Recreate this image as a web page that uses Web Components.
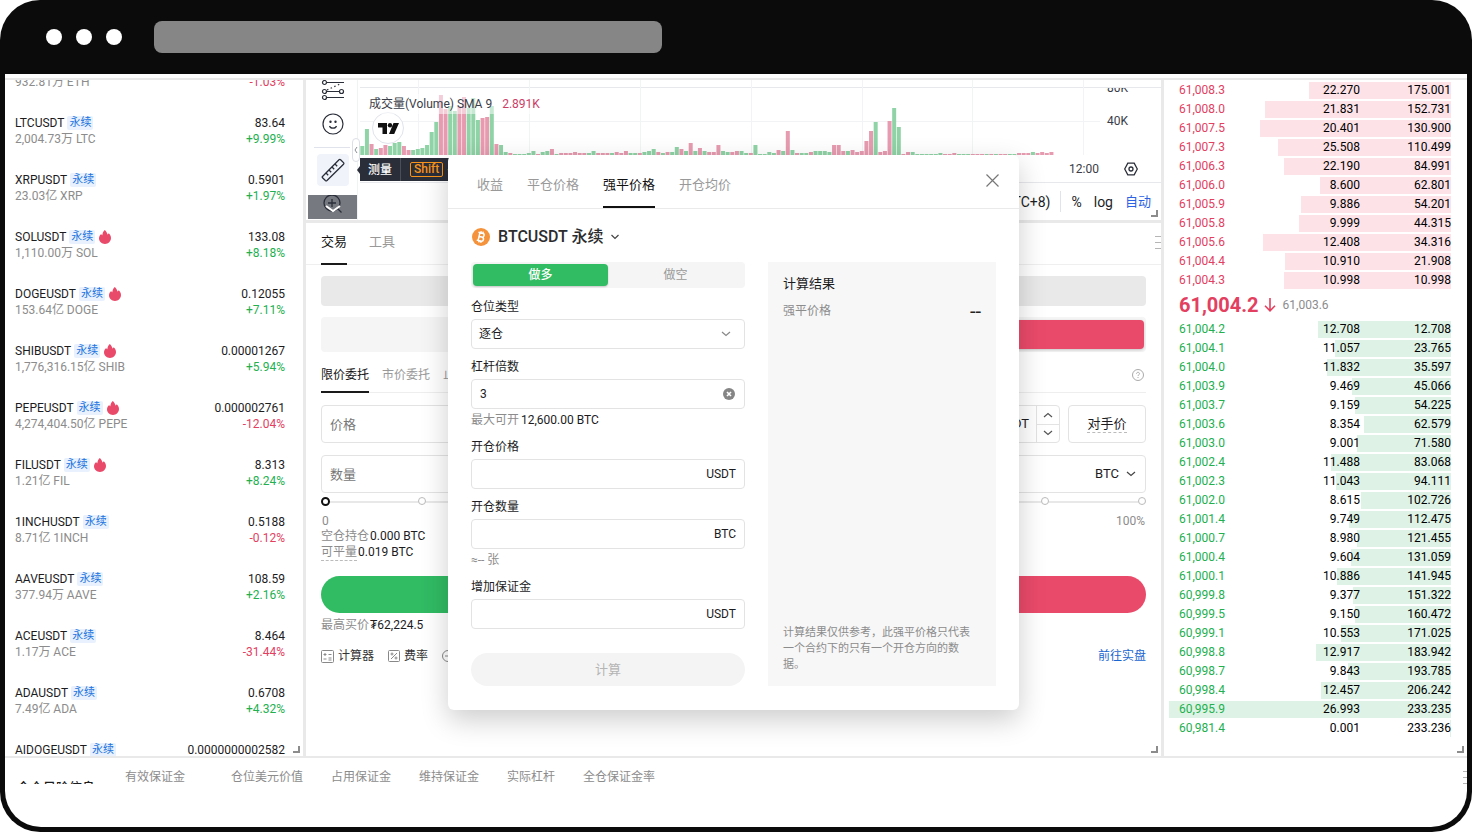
<!DOCTYPE html>
<html lang="zh-CN">
<head>
<meta charset="utf-8">
<title>BTCUSDT 永续</title>
<style>
  body {
    margin: 0;
    background: #fff;
    color: #1c1c1e;
    font: 12px/16px Roboto, "Noto Sans CJK SC", sans-serif;
  }
</style>
</head>
<body>
<browser-frame>
  <trading-desk>
    <market-list slot="left"></market-list>
    <chart-panel slot="center"></chart-panel>
    <trade-panel slot="center"></trade-panel>
    <calc-dialog slot="overlay"></calc-dialog>
    <order-book slot="right"></order-book>
  </trading-desk>
  <risk-bar></risk-bar>
</browser-frame>

<script>
const BASE = `
  :host, *, *::before, *::after { box-sizing: border-box; }
  button, input, select { font: inherit; color: inherit; margin: 0; padding: 0; border: 0; background: none; outline: 0; }
  button { cursor: pointer; }
  svg { display: block; flex: none; }
  a { color: inherit; text-decoration: none; }
`;

class Part extends HTMLElement {
  constructor() {
    super();
    this.attachShadow({ mode: 'open' });
  }
  connectedCallback() {
    this.shadowRoot.innerHTML = `<style>${BASE}${this.css()}</style>${this.html()}`;
  }
  css() { return ''; }
  html() { return ''; }
}

/* Browser window chrome */
customElements.define('browser-frame', class extends Part {
  css() { return `
    :host { display: flex; flex-direction: column; height: 100vh; min-height: 600px; padding: 0 5px 5px; background: #0b0b0b; border-radius: 40px; overflow: hidden; }
    header { flex: none; display: flex; align-items: center; height: 74px; padding-left: 41px; gap: 14px; }
    i { width: 16px; height: 16px; border-radius: 50%; background: #fff; }
    .address { width: 508px; height: 32px; margin-left: 18px; border-radius: 8px; background: #868686; }
    main { flex: 1; min-height: 0; display: flex; flex-direction: column; padding-top: 4px; background: #fff; border-radius: 0 0 36px 36px; overflow: hidden; }
  `; }
  html() { return `
    <header><i></i><i></i><i></i><div class="address"></div></header>
    <main><slot></slot></main>
  `; }
});

/* Three column workspace */
customElements.define('trading-desk', class extends Part {
  css() { return `
    :host { flex: 1; min-height: 0; display: grid; grid-template-columns: 298px minmax(0, 1fr) 303px; grid-template-rows: minmax(0, 1fr); gap: 3px; padding-top: 2px; background: #e9e9e9; }
    section { position: relative; min-height: 0; background: #fff; overflow: hidden; }
    .center { display: flex; flex-direction: column; }
  `; }
  html() { return `
    <section><slot name="left"></slot><corner-grip></corner-grip></section>
    <section class="center"><slot name="center"></slot><corner-grip></corner-grip><slot name="overlay"></slot></section>
    <section><slot name="right"></slot><corner-grip></corner-grip></section>
  `; }
});

customElements.define('corner-grip', class extends Part {
  css() { return `
    :host { position: absolute; right: 3px; bottom: 3px; width: 7px; height: 7px; border: solid #8c8c8c; border-width: 0 2px 2px 0; }
  `; }
});

customElements.define('panel-grip', class extends Part {
  css() { return `
    :host { position: absolute; right: 0; width: 6px; height: 13px; background: repeating-linear-gradient(#b5b5b5 0 1px, transparent 1px 6px); }
  `; }
});

/* Markets */
const MARKETS = [
  ['', '', '932.81万 ETH', '-1.03%'],
  ['LTCUSDT', '83.64', '2,004.73万 LTC', '+9.99%'],
  ['XRPUSDT', '0.5901', '23.03亿 XRP', '+1.97%'],
  ['SOLUSDT', '133.08', '1,110.00万 SOL', '+8.18%', 1],
  ['DOGEUSDT', '0.12055', '153.64亿 DOGE', '+7.11%', 1],
  ['SHIBUSDT', '0.00001267', '1,776,316.15亿 SHIB', '+5.94%', 1],
  ['PEPEUSDT', '0.000002761', '4,274,404.50亿 PEPE', '-12.04%', 1],
  ['FILUSDT', '8.313', '1.21亿 FIL', '+8.24%', 1],
  ['1INCHUSDT', '0.5188', '8.71亿 1INCH', '-0.12%'],
  ['AAVEUSDT', '108.59', '377.94万 AAVE', '+2.16%'],
  ['ACEUSDT', '8.464', '1.17万 ACE', '-31.44%'],
  ['ADAUSDT', '0.6708', '7.49亿 ADA', '+4.32%'],
  ['AIDOGEUSDT', '0.0000000002582', '', ''],
];

customElements.define('market-row', class extends Part {
  css() { return `
    :host { display: block; height: 57px; }
    .line { display: flex; align-items: center; height: 16px; }
    .end { margin-left: auto; }
    .tag { margin-left: 3px; padding: 0 2px; border-radius: 2px; background: #e8f1fd; color: #1a73e0; font-size: 11px; line-height: 14px; }
    .sub { color: #8c8c8c; }
    .up { color: #22b04f; }
    .down { color: #e3405f; }
    svg { margin-left: 4px; }
  `; }
  html() {
    const [name, price, vol, change, hot] = MARKETS[this.getAttribute('index')];
    return `
      <div class="line">${name ? `<span>${name}</span><span class="tag">永续</span>` : ''}
        ${hot ? `<svg width="12" height="14" viewBox="0 0 12 14"><path fill="#ea4a6a" d="M5.800 0C7.200 1.400 8.200 2.800 8.400 4.600c.7-.3 1-.7 1.300-1.300C11.200 4.600 12 6.200 12 8.100 12 11.500 9.300 14 6 14S0 11.500 0 8.300C0 6.200 1 5 2.300 3.900c.2.800.5 1.100 1 1.300C3.500 3.200 4.300 1.400 5.800 0z"/></svg>` : ''}
        <span class="end">${price}</span></div>
      <div class="line sub"><span>${vol}</span><span class="end ${change[0] === '+' ? 'up' : 'down'}">${change}</span></div>
    `;
  }
});

customElements.define('market-list', class extends Part {
  css() { return `
    :host { display: block; margin-top: -22px; padding: 0 18px 0 10px; }
  `; }
  html() { return MARKETS.map((m, i) => `<market-row index="${i}"></market-row>`).join(''); }
});

/* Volume chart: g = rising bar, r = falling bar, followed by its height */
const VOLUME = (
  'g9 g26 r11 g6 r7 r10 g9 g12 g13 r9 r5 g5 g6 g7 g10 g23 g33 r60 r46 g49 g44 r49 r58 g47 g57 g35 r37 r38 g49 r11 g10 g3 r2 g1 g1 g1 g2 g4 r1 g3 g4 r6 g1 r2 r2 r2 r3 r2 r2 g2 g4 r2 r2 r2 g2 r3 r2 r4 g2 g2 r2 g3 g4 g6 r3 g2 r3 g3 ' +
  'g8 r6 g4 r12 g4 r7 g4 r3 r3 r10 g4 g3 r3 r4 g4 g2 r2 g10 g1 g1 g3 g2 r5 g4 r24 g5 r2 g2 g2 r3 g4 g4 g4 g3 r10 r10 r4 g4 r5 r3 r4 r14 r24 g33 r3 r4 r34 g47 g28 r1 r3 g3 g1 g1 g1 g1 g1 g2 r1 r1 r2 g1 g1 g1 r1 r1 r1 g1 r1 g1 r1 r1 g1 g1 r2 r2 r2 g3 r2 r3 r2 r3'
).split(' ');

customElements.define('volume-bars', class extends Part {
  css() { return `:host { display: block; }`; }
  html() {
    const step = 4.625;
    const bars = VOLUME.map((v, i) => {
      const h = +v.slice(1);
      return `<rect x="${(0.3 + i * step).toFixed(2)}" y="${75 - h}" width="4" height="${h}" fill="${v[0] === 'g' ? '#8fd3a6' : '#e79bb0'}"/>`;
    }).join('');
    const grid = [58, 169, 280, 391, 502, 612, 723].map(x => `<path d="M${x}.5 0V75"/>`).join('');
    return `<svg width="740" height="75" viewBox="0 0 740 75"><g stroke="#f2f3f4">${grid}<path d="M0 41.500H740"/></g>${bars}</svg>`;
  }
});

customElements.define('chart-panel', class extends Part {
  css() { return `
    :host { flex: none; display: flex; position: relative; height: 143px; border-bottom: 3px solid #e9e9e9; color: #3a3d47; }
    nav { flex: none; width: 54px; padding-left: 2px; display: flex; flex-direction: column; align-items: center; background: linear-gradient(90deg, #fff 51px, #f1f2f4 51px 52px, #fff 52px); }
    nav button { display: grid; place-items: center; width: 32px; height: 32px; margin-right: 3px; border-radius: 4px; }
    nav .lines { height: 21px; }
    nav .smile { height: 45px; }
    nav .on { margin-top: 6px; background: #f0f3fa; }
    nav hr { width: 36px; margin: 1px 4px 0 0; border: 0; border-top: 1px solid #e0e3eb; }
    nav .zoom { position: relative; width: 49px; height: 24px; margin-top: 9px; border-radius: 0; background: #777980; overflow: hidden; }
    .plot { flex: 1; min-width: 0; display: flex; flex-direction: column; }
    .pane { position: relative; display: flex; justify-content: space-between; height: 75px; background: linear-gradient(transparent 7px, #e6e8ec 7px 8px, transparent 8px); }
    .scale { width: 61px; height: 67px; margin-top: 8px; padding-left: 7px; overflow: hidden; }
    .scale div { height: 33px; line-height: 33px; }
    .scale div:first-child { margin-top: -16px; }
    .time, .modes { display: flex; align-items: center; justify-content: flex-end; }
    .time { height: 28px; padding-right: 23px; gap: 25px; border-bottom: 1px solid #e6e8ec; }
    .modes { height: 37px; padding-right: 10px; gap: 12px; font-size: 14px; color: #1c1e26; }
    .modes i { width: 1px; height: 21px; margin: 0 -2px; background: #e0e3eb; }
    .auto { font-size: 13px; color: #2b62e3; }
    .legend { position: absolute; left: 57px; top: 14px; display: flex; gap: 10px; padding: 0 6px; line-height: 20px; background: #ffffff80; }
    .legend b { font-weight: 400; color: #cc3d66; }
    .logo { position: absolute; left: 66px; top: 32px; width: 32px; height: 32px; border-radius: 50%; background: #fff; border: 1px solid #e0e3eb; display: grid; place-items: center; }
    .handle { position: absolute; left: 46px; top: 58px; width: 8px; height: 24px; border: 1px solid #dcdfe6; border-radius: 4px; background: #fff; display: grid; place-items: center; }
    .tip { position: absolute; left: 54px; top: 78px; display: flex; align-items: center; height: 23px; background: #2a2e39; color: #fff; font-weight: 500; font-size: 12px; }
    .tip::before { content: ""; position: absolute; left: -3px; border: solid transparent; border-width: 4px 3px 4px 0; border-right-color: #2a2e39; }
    .tip span { padding: 0 8px; }
    .tip .key { display: flex; align-items: center; gap: 4px; height: 100%; padding: 0 60px 0 9px; border-left: 1px solid #4a4e5a; color: #f7931a; }
    kbd { font: inherit; line-height: 13px; padding: 0 3px; border: 1px solid #f7931a; border-radius: 2px; }
  `; }
  html() { return `
    <nav>
      <button class="lines" aria-label="形态"><svg width="24" height="21" viewBox="0 0 24 21" fill="none" stroke="#2a2e39" stroke-width="1.200"><path d="M5.500 2.500H23M5.500 11.500h13M5.500 17.500H23"/><path d="M6 10L20 3.500" stroke-dasharray="1.500 2.500"/><circle cx="3.500" cy="2.500" r="2"/><circle cx="3.500" cy="11.500" r="2"/><circle cx="20.500" cy="11.500" r="2"/><circle cx="3.500" cy="17.500" r="2"/></svg></button>
      <button class="smile" aria-label="表情"><svg width="22" height="22" viewBox="0 0 22 22" fill="none" stroke="#2a2e39" stroke-width="1.200"><circle cx="11" cy="11" r="10"/><path d="M7.500 13c.8 2.800 6.200 2.800 7 0"/><circle cx="8.500" cy="8.700" r=".6" fill="#2a2e39"/><circle cx="13.500" cy="8.700" r=".6" fill="#2a2e39"/></svg></button>
      <hr>
      <button class="on" aria-label="测量"><svg width="24" height="24" viewBox="0 0 24 24" fill="none" stroke="#2a2e39" stroke-width="1.300"><path d="M1.500 18.500L18 1.700q.8-.7 1.600 0l2.900 2.900q.7.800 0 1.600L6 22.500q-.8.700-1.600 0l-2.900-2.700q-.6-.7 0-1.300z"/><path d="M5 15l2.200 2.200M8 12l2.200 2.200M11 9l2.200 2.200M14 6l2.200 2.200"/></svg></button>
      <button class="zoom" aria-label="放大"><svg width="24" height="24" viewBox="0 0 24 24" fill="none" stroke="#2a2e39" stroke-width="1.300"><circle cx="11" cy="8" r="8"/><path d="M11 4v8M7 8h8M16.500 13.500l4 4"/><path stroke="#fff" stroke-width="2" d="M5 11l7 5 7-5"/></svg></button>
    </nav>
    <div class="plot">
      <div class="pane"><volume-bars></volume-bars><div class="scale"><div>80K</div><div>40K</div></div></div>
      <div class="time"><span>12:00</span><svg width="14" height="14" viewBox="0 0 14 14" fill="none" stroke="#2a2e39" stroke-width="1.300"><path d="M3.800 1.200h6.400L13.300 7l-3.100 5.800H3.800L.7 7z"/><circle cx="7" cy="7" r="2"/></svg></div>
      <div class="modes"><span>(UTC+8)</span><i></i><span>%</span><span>log</span><span class="auto">自动</span></div>
    </div>
    <div class="logo"><svg width="21" height="13" viewBox="0 0 21 13" fill="#111"><path d="M0 1h9v11H4.500V5.500H0zM15.500 1H21l-4.800 11H11z"/><circle cx="12" cy="3.200" r="2.200"/></svg></div>
    <div class="legend"><span>成交量(Volume) SMA 9</span><b>2.891K</b></div>
    <div class="handle"><svg width="4" height="8" viewBox="0 0 4 8" fill="none" stroke="#8a8d96"><path d="M3 1L1 4l2 3"/></svg></div>
    <div class="tip"><span>测量</span><div class="key"><kbd>Shift</kbd>-</div></div>
    <corner-grip></corner-grip>
  `; }
});

/* Order entry */
customElements.define('trade-panel', class extends Part {
  css() { return `
    :host { position: relative; flex: 1; min-height: 0; display: block; }
    nav { display: flex; }
    nav button { border-bottom: 2px solid transparent; color: #999; text-align: left; }
    nav .on { color: #111; border-color: #1a1a1a; }
    .top { height: 42px; padding: 0 15px; gap: 22px; border-bottom: 1px solid #efefef; }
    .top button { height: 42px; padding-bottom: 2px; font-size: 13px; }
    .body { padding: 11px 15px 0; }
    .mode { height: 30px; border-radius: 4px; background: #e9e9e9; }
    .side { display: flex; height: 35px; margin-top: 11px; padding: 3px 2px; border-radius: 4px; background: #f5f5f5; }
    .side span { flex: 1; border-radius: 4px; }
    .side span + span { background: #ea4a6a; box-shadow: 0 1px 3px #0003; }
    .kinds { height: 35px; margin-top: 6px; gap: 13px; border-bottom: 1px solid #eee; }
    .kinds button { height: 35px; line-height: 34px; }
    .kinds .help { margin-left: auto; padding-right: 2px; }
    .row { display: flex; gap: 8px; margin-top: 12px; }
    .field { flex: 1; min-width: 0; display: flex; align-items: center; height: 38px; border: 1px solid #e3e3e3; border-radius: 4px; font-size: 13px; }
    .field input { flex: 1; min-width: 0; height: 100%; padding-left: 8px; }
    .field input::placeholder { color: #777; opacity: 1; }
    .field.qty { padding-right: 9px; }
    .step { display: flex; flex-direction: column; width: 23px; height: 100%; margin-left: 7px; border-left: 1px solid #e3e3e3; }
    .step button { flex: 1; display: grid; place-items: center; }
    .step button + button { border-top: 1px solid #e3e3e3; }
    .best { width: 78px; border: 1px solid #e3e3e3; border-radius: 4px; font-size: 13px; }
    .best span { border-bottom: 1px dashed #bbb; padding-bottom: 1px; }
    .unit { appearance: none; width: 27px; margin-right: 4px; }
    .range { position: relative; display: grid; grid-template-columns: 97px 1fr 97px; height: 9px; margin-top: 4px; padding: 0 4px; background: linear-gradient(transparent 4px, #e8e8e8 4px 6px, transparent 6px); }
    .range i { justify-self: end; width: 8px; height: 8px; margin-right: -4px; border: 1px solid #bbb; border-radius: 50%; background: #fff; }
    .range input { position: absolute; inset: 0; width: 100%; height: 9px; appearance: none; }
    .range input::-webkit-slider-thumb { appearance: none; width: 9px; height: 9px; border: 2px solid #111; border-radius: 50%; background: #fff; }
    .marks { display: flex; justify-content: space-between; height: 15px; margin-top: 7px; padding: 0 1px; color: #8c8c8c; }
    .info { display: flex; gap: 1px; color: #8c8c8c; }
    .info b { font-weight: 400; color: #1c1c1e; }
    .dash { border-bottom: 1px dashed #bbb; }
    .pill { display: flex; height: 37px; margin: 15px 0 4px; border-radius: 19px; overflow: hidden; }
    .pill button { flex: 1; background: #31bb63; }
    .pill button + button { background: #ea4a6a; }
    .tools { display: flex; align-items: center; margin-top: 15px; gap: 4px; color: #333; }
    .tools svg + span { margin-right: 10px; }
    .tools a { margin-left: auto; color: #1a66d0; }
    panel-grip { top: 13px; }
  `; }
  html() { return `
    <nav class="top"><button class="on">交易</button><button>工具</button></nav>
    <panel-grip></panel-grip>
    <div class="body">
      <div class="mode"></div>
      <div class="side"><span></span><span></span></div>
      <nav class="kinds"><button class="on">限价委托</button><button>市价委托</button><button>止盈</button>
        <button class="help" aria-label="帮助"><svg width="12" height="12" viewBox="0 0 12 12" fill="none" stroke="#aaa"><circle cx="6" cy="6" r="5.500"/><path d="M4.500 4.800c0-2 3-2 3 0 0 1-1.500 1-1.500 2.200M6 8v1"/></svg></button></nav>
      <div class="row">
        <div class="field"><input aria-label="价格" placeholder="价格"><span>USDT</span>
          <div class="step"><button aria-label="增加"><svg width="10" height="6" viewBox="0 0 10 6" fill="none" stroke="#555" stroke-width="1.200"><path d="M1 5l4-3.500L9 5"/></svg></button><button aria-label="减少"><svg width="10" height="6" viewBox="0 0 10 6" fill="none" stroke="#555" stroke-width="1.200"><path d="M1 1l4 3.500L9 1"/></svg></button></div></div>
        <button class="best"><span>对手价</span></button>
      </div>
      <div class="row"><div class="field qty"><input aria-label="数量" placeholder="数量"><select class="unit" aria-label="单位"><option>BTC</option></select><svg width="10" height="6" viewBox="0 0 10 6" fill="none" stroke="#444" stroke-width="1.200"><path d="M1 1l4 3.500L9 1"/></svg></div></div>
      <div class="range"><i></i><i></i><i></i><input type="range" aria-label="仓位比例" min="0" max="100" value="0"></div>
      <div class="marks"><span>0</span><span>100%</span></div>
      <div class="info"><span>空仓持仓</span><b>0.000 BTC</b></div>
      <div class="info"><span class="dash">可平量</span><b>0.019 BTC</b></div>
      <div class="pill"><button aria-label="买入"></button><button aria-label="卖出"></button></div>
      <div class="info"><span>最高买价</span><b>₮62,224.5</b></div>
      <div class="tools">
        <svg width="13" height="13" viewBox="0 0 13 13" fill="none" stroke="#888"><rect x=".5" y=".5" width="12" height="12" rx="1"/><path d="M2.500 4.500h3M4 3v3M7.500 4.500h3M2.500 9h3M7.500 8h3M7.500 10h3"/></svg><span>计算器</span>
        <svg width="12" height="12" viewBox="0 0 12 12" fill="none" stroke="#888"><rect x=".5" y=".5" width="11" height="11" rx="1"/><path d="M9 3L3 9"/><circle cx="4" cy="4" r="1"/><circle cx="8" cy="8" r="1"/></svg><span>费率</span>
        <svg width="12" height="12" viewBox="0 0 12 12" fill="none" stroke="#888"><circle cx="6" cy="6" r="5.500"/><path d="M3 6h6"/></svg>
        <a href="#">前往实盘</a>
      </div>
    </div>
  `; }
});

/* Calculator dialog */
customElements.define('calc-field', class extends Part {
  css() { return `
    :host { display: block; margin-bottom: 8px; }
    label { display: block; line-height: 20px; margin-bottom: 2px; }
    .box { display: flex; align-items: center; height: 30px; padding: 0 8px; border: 1px solid #e3e3e3; border-radius: 4px; }
    input { flex: 1; min-width: 0; height: 28px; }
    ::slotted(*) { flex: none; }
  `; }
  html() {
    const value = this.getAttribute('value') || '';
    return `
      <label for="f">${this.getAttribute('label')}</label>
      <div class="box"><input id="f" value="${value}"><slot name="end"></slot></div>
    `;
  }
});

customElements.define('calc-dialog', class extends Part {
  css() { return `
    :host { position: absolute; top: 75px; left: 0; right: 0; width: 571px; margin: 0 auto; border-radius: 6px; background: #fff; box-shadow: 0 10px 28px #0003; }
    nav { position: relative; display: flex; gap: 24px; height: 54px; padding-left: 29px; border-bottom: 1px solid #eaeaea; }
    nav button { height: 53px; padding-top: 8px; border-bottom: 2px solid transparent; font-size: 13px; color: #999; }
    nav .on { color: #111; border-color: #111; }
    nav .close { margin-left: auto; padding: 0 20px 3px 0; border: 0; }
    h2 { display: flex; align-items: center; gap: 8px; margin: 0; padding: 17px 0 14px 24px; font-size: 16px; line-height: 22px; font-weight: 500; color: #2c2c2e; }
    .cols { display: flex; gap: 23px; padding: 0 23px 24px; }
    form { flex: 1; min-width: 0; }
    .seg { display: flex; height: 26px; margin-bottom: 9px; padding: 2px; border-radius: 4px; background: #f5f5f5; }
    .seg button { flex: 1; border-radius: 4px; color: #999; line-height: 20px; }
    .seg .on { background: #31bb63; color: #fff; font-weight: 500; box-shadow: 0 1px 2px #0003; }
    label { display: block; line-height: 20px; margin-bottom: 2px; }
    .select { position: relative; display: flex; align-items: center; height: 30px; margin-bottom: 8px; padding: 0 13px 0 7px; border: 1px solid #e3e3e3; border-radius: 4px; }
    select { flex: 1; appearance: none; height: 28px; }
    .hint { display: flex; gap: 2px; margin: -5px 0 9px; color: #8c8c8c; }
    .hint b { font-weight: 400; color: #1c1c1e; }
    .clear { margin-right: 1px; }
    .submit { display: block; width: 100%; height: 33px; margin-top: 24px; border-radius: 17px; background: #f4f4f4; color: #b5b5b5; font-size: 13px; }
    aside { display: flex; flex-direction: column; width: 228px; padding: 12px 15px; background: #f7f7f7; }
    h3 { margin: 0 0 9px; font-size: 13px; line-height: 20px; font-weight: 400; }
    .result { display: flex; justify-content: space-between; color: #8c8c8c; }
    .result b { color: #222; font-weight: 400; font-size: 20px; }
    p { margin: auto 2px 1px 0; font-size: 11px; color: #8c8c8c; }
  `; }
  html() { return `
    <nav><button>收益</button><button>平仓价格</button><button class="on">强平价格</button><button>开仓均价</button>
      <button class="close" aria-label="关闭"><svg width="13" height="13" viewBox="0 0 13 13" stroke="#777" stroke-width="1.200"><path d="M.5.5l12 12M12.500.5l-12 12"/></svg></button></nav>
    <h2><svg width="18" height="18" viewBox="0 0 18 18"><circle cx="9" cy="9" r="9" fill="#f4933c"/><g transform="rotate(13 9 9)" fill="none" stroke="#fff" stroke-width="1.500"><path d="M7 5v8M5.500 5h4.200c2.600 0 2.600 3.900 0 3.900H7M9.700 8.900c3 0 3 4.100 0 4.100H5.500M8 3.300V5M10 3.300V5M8 13v1.700M10 13v1.700"/></g></svg><span>BTCUSDT 永续</span><svg width="8" height="6" viewBox="0 0 8 6" fill="none" stroke="#444" stroke-width="1.200"><path d="M.5 1L4 4.500 7.500 1"/></svg></h2>
    <div class="cols">
      <form>
        <div class="seg"><button type="button" class="on">做多</button><button type="button">做空</button></div>
        <label for="margin">仓位类型</label>
        <div class="select"><select id="margin"><option>逐仓</option></select><svg width="10" height="6" viewBox="0 0 10 6" fill="none" stroke="#888" stroke-width="1.200"><path d="M1 1l4 3.500L9 1"/></svg></div>
        <calc-field label="杠杆倍数" value="3"><svg slot="end" class="clear" width="12" height="12" viewBox="0 0 12 12"><circle cx="6" cy="6" r="6" fill="#858585"/><path d="M4 4l4 4M8 4l-4 4" stroke="#fff" stroke-width="1.600"/></svg></calc-field>
        <div class="hint"><span>最大可开</span><b>12,600.00 BTC</b></div>
        <calc-field label="开仓价格"><span slot="end">USDT</span></calc-field>
        <calc-field label="开仓数量"><span slot="end">BTC</span></calc-field>
        <div class="hint">≈-- 张</div>
        <calc-field label="增加保证金"><span slot="end">USDT</span></calc-field>
        <button type="button" class="submit">计算</button>
      </form>
      <aside><h3>计算结果</h3><div class="result"><span>强平价格</span><b>--</b></div>
        <p>计算结果仅供参考，此强平价格只代表一个合约下的只有一个开仓方向的数据。</p></aside>
    </div>
  `; }
});

/* Order book */
const ASKS = [
  ['61,008.3', '22.270', '175.001', 142], ['61,008.0', '21.831', '152.731', 186], ['61,007.5', '20.401', '130.900', 191],
  ['61,007.3', '25.508', '110.499', 173], ['61,006.3', '22.190', '84.991', 167], ['61,006.0', '8.600', '62.801', 131],
  ['61,005.9', '9.886', '54.201', 150], ['61,005.8', '9.999', '44.315', 152], ['61,005.6', '12.408', '34.316', 188],
  ['61,004.4', '10.910', '21.908', 166], ['61,004.3', '10.998', '10.998', 167],
];
const BIDS = [
  ['61,004.2', '12.708', '12.708'], ['61,004.1', '11.057', '23.765'], ['61,004.0', '11.832', '35.597'],
  ['61,003.9', '9.469', '45.066'], ['61,003.7', '9.159', '54.225'], ['61,003.6', '8.354', '62.579'],
  ['61,003.0', '9.001', '71.580'], ['61,002.4', '11.488', '83.068'], ['61,002.3', '11.043', '94.111'],
  ['61,002.0', '8.615', '102.726'], ['61,001.4', '9.749', '112.475'], ['61,000.7', '8.980', '121.455'],
  ['61,000.4', '9.604', '131.059'], ['61,000.1', '10.886', '141.945'], ['60,999.8', '9.377', '151.322'],
  ['60,999.5', '9.150', '160.472'], ['60,999.1', '10.553', '171.025'], ['60,998.8', '12.917', '183.942'],
  ['60,998.7', '9.843', '193.785'], ['60,998.4', '12.457', '206.242'], ['60,995.9', '26.993', '233.235'],
  ['60,981.4', '0.001', '233.236'],
];

customElements.define('order-book', class extends Part {
  css() { return `
    :host { display: block; padding: 1px 16px 0 5px; }
    table, tbody { display: block; }
    tr { display: grid; grid-template-columns: 1fr 100px 91px; height: 19px; padding-left: 10px; line-height: 19px; background: linear-gradient(to left, var(--bar) var(--w), transparent var(--w)) 0 1px / 100% 17px no-repeat; }
    td { padding: 0; text-align: right; color: #000; }
    td:first-child { text-align: left; }
    .ask { --bar: #fde3e8; }
    .ask td:first-child { color: #e3405f; }
    .bid { --bar: #def3e5; }
    .bid td:first-child { color: #22b04f; }
    .last { display: flex; align-items: center; gap: 5px; height: 30px; padding-left: 10px; color: #e3405f; }
    .last b { font-size: 20px; font-weight: 700; }
    .last span { margin-left: 2px; color: #8c8c8c; }
  `; }
  rows(list, kind) {
    return `<table class="${kind}"><tbody>${list.map(([p, q, t, w]) => `<tr style="--w:${w || Math.max(1, Math.round(q * 10.45))}px"><td>${p}</td><td>${q}</td><td>${t}</td></tr>`).join('')}</tbody></table>`;
  }
  html() { return `
    ${this.rows(ASKS, 'ask')}
    <div class="last"><b>61,004.2</b><svg width="12" height="14" viewBox="0 0 12 14" fill="none" stroke="#e3405f" stroke-width="1.600"><path d="M6 0v12.500M1 7.800l5 5 5-5"/></svg><span>61,003.6</span></div>
    ${this.rows(BIDS, 'bid')}
  `; }
});

/* Account risk strip */
customElements.define('risk-bar', class extends Part {
  css() { return `
    :host { flex: none; display: block; height: 71px; border-top: 2px solid #e9e9e9; }
    .strip { position: relative; display: flex; height: 26px; overflow: hidden; color: #8c8c8c; white-space: nowrap; }
    b { width: 110px; padding: 22px 0 0 12px; font-size: 13px; font-weight: 500; color: #1c1c1e; }
    ul { display: flex; gap: 28px; margin: 0; padding: 11px 0 0 10px; list-style: none; }
    li:first-child { margin-right: 18px; }
    panel-grip { top: 13px; right: -2px; }
  `; }
  html() { return `
    <div class="strip"><b>全仓风险信息</b><ul>${['有效保证金', '仓位美元价值', '占用保证金', '维持保证金', '实际杠杆', '全仓保证金率'].map(t => `<li>${t}</li>`).join('')}</ul><panel-grip></panel-grip></div>
  `; }
});
</script>
</body>
</html>
